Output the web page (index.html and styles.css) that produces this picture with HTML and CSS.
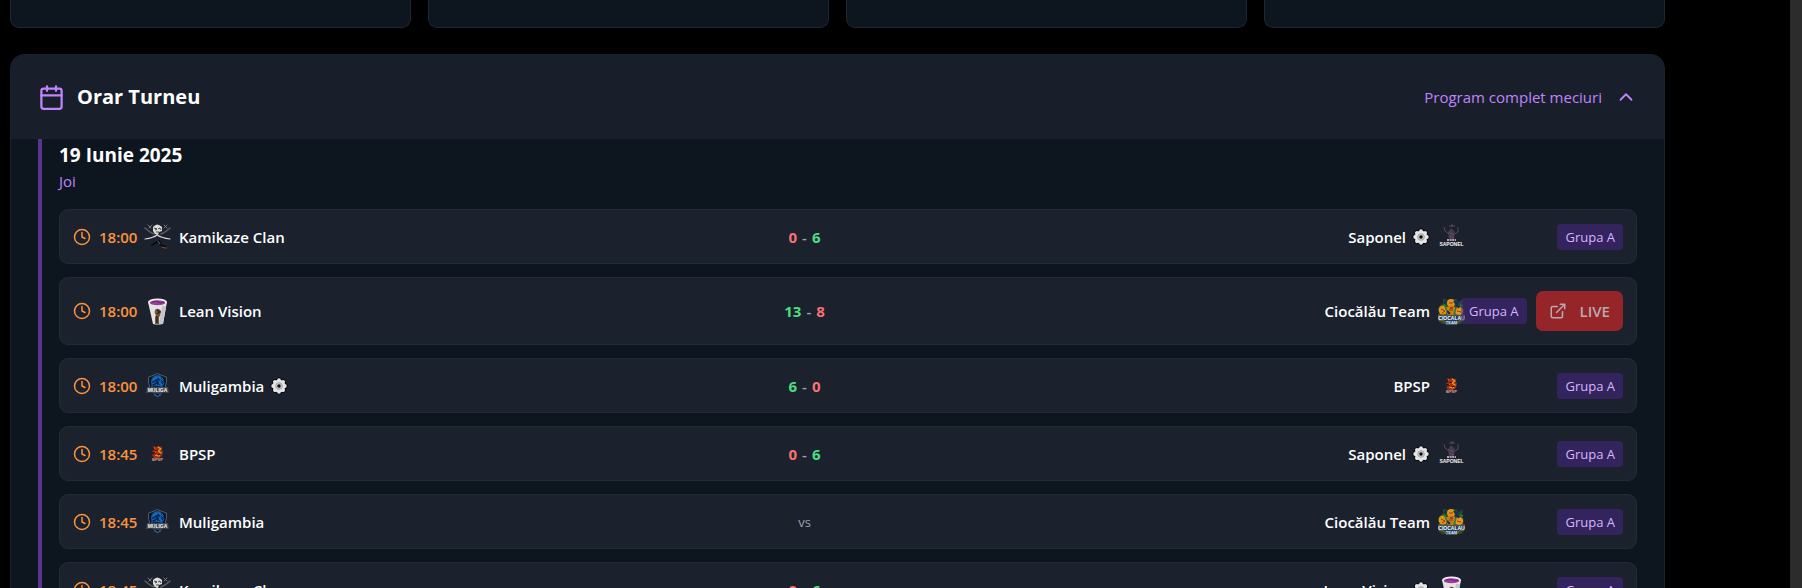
FILE: index.html
```html
<!DOCTYPE html>
<html lang="ro">
<head>
<meta charset="utf-8">
<title>Orar Turneu</title>
<link rel="stylesheet" href="styles.css">
</head>
<body>
<svg class="sprite" aria-hidden="true">
  <symbol id="clock" viewBox="0 0 24 24"><circle cx="12" cy="12" r="10"/><path d="M12 6v6l4 2"/></symbol>
  <symbol id="gear" viewBox="0 0 18 18">
    <g stroke="#0b0d10" stroke-width="5.400" stroke-linecap="round"><path d="M9 3v12M3 9h12M4.800 4.800l8.400 8.400M13.200 4.800l-8.400 8.400"/></g>
    <circle cx="9" cy="9" r="7" fill="#0b0d10"/>
    <g stroke="#e6e6e6" stroke-width="3.800" stroke-linecap="round"><path d="M9 3.200v11.600M3.200 9h11.600M4.900 4.900l8.200 8.200M13.100 4.900l-8.200 8.200"/></g>
    <circle cx="9" cy="9" r="6.300" fill="#e6e6e6"/>
    <circle cx="9" cy="9" r="3.400" fill="#c4c4c4" stroke="#a2a2a2" stroke-width=".8"/>
    <circle cx="9" cy="9" r="1.700" fill="#0b0d10"/>
  </symbol>
  <symbol id="kamikaze" viewBox="0 0 27 27">
    <g fill="none" stroke-linecap="round">
      <path d="M1 5q4 4 9 6M26 5q-4 4-9 6" stroke="#5e5c5b" stroke-width="1.500"/>
      <path d="M4 2l3 3M5 5l3-3M20 5l3-3M20 2l3 3" stroke="#85817d" stroke-width=".9"/>
      <path d="M1 16q8-1 12-4q5 3 13 4" stroke="#d9d9d6" stroke-width="1.200"/>
      <path d="M8 22l7-4 2 4 4 2" stroke="#080a0d" stroke-width="2"/>
      <path d="M14 18l2 3M18 24l3 1" stroke="#776560" stroke-width=".9"/>
    </g>
    <path d="M9 4q4-5 9 0l0 4-3 1-1 3-3-1-2-3z" fill="#dddcd8"/>
    <path d="M10 5l3 1-2 1M14 6l2-1 1 2M12 9l3 0" fill="none" stroke="#202229" stroke-width=".8"/>
    <path d="M21 25h2" stroke="#b32727" stroke-width="1"/>
  </symbol>
  <symbol id="lean" viewBox="0 0 27 27">
    <path d="M4 4l5 22q4 1 10 0l4-22z" fill="#e4e2e3"/>
    <path d="M18 8h4l-3 18h-4z" fill="#c6c4c7"/>
    <ellipse cx="13.500" cy="4" rx="9.500" ry="3.500" fill="#f4f1f3"/>
    <ellipse cx="13.500" cy="4.800" rx="7.800" ry="2.500" fill="#9b3d9e"/>
    <path d="M8 4q4-2 9 1l3-1" stroke="#6d246f" fill="none"/>
    <path d="M11 12q3-3 6 1l-1 5-1 1v7h-4v-7l1-2q-2-1-1-5z" fill="#70583a"/>
    <path d="M13 12l3 2-3 2M13 18v7" stroke="#292018" stroke-width="1.400" fill="none"/>
  </symbol>
  <symbol id="muli" viewBox="0 0 27 27">
    <path d="M4.500 5l4.500-1.500 4.500-2 4.500 2 4.500 1.500q1 13-9 19.500Q3.500 18 4.500 5z" fill="#0b1320" stroke="#53606e"/>
    <path d="M7 9q1-6 8-6l4 3 1.500 5-2 4-6-1-5 1z" fill="#0e5cab"/>
    <path d="M8 10l6-4 3 2-3 1 2 4-4-1-3 3zM17 5l3 5-2 3z" fill="#082752"/>
    <path d="M9 8l4-3M15 5l4 4M8 12l4-2M15 11l3 2" stroke="#2a7dcc" stroke-width=".8"/>
    <path d="M3 15h21l1 6-6-.500-5 1.500-6-1.500-6 .500z" fill="#454a50"/>
    <text x="13.500" y="20" text-anchor="middle" class="crest" fill="#f2f2f0" font-size="5">MULIGA</text>
    <path d="M10 23l3.500 1.500L17 23" stroke="#1665aa" fill="none"/>
  </symbol>
  <symbol id="bpsp" viewBox="0 0 27 27">
    <path d="M9 6l3 1 2-1 4 1-1 3 2 1-1 5-3 2h-5l-2-3 2-1-2-3 3-1z" fill="#a92c10"/>
    <path d="M14 7l3 2-3 2 3 2-2 3-4-1" fill="none" stroke="#dea01c" stroke-width="1.200"/>
    <path d="M10 7l2 4-1 3" fill="none" stroke="#f04b18"/>
    <path d="M14 15l3-1M11 10l3 1M9 12l3 2" stroke="#16120e"/>
    <text x="13.500" y="20.500" text-anchor="middle" class="crest" fill="#d6a49b" font-size="4">BPSP</text>
  </symbol>
  <symbol id="saponel" viewBox="0 0 27 27">
    <path d="M6 3q1 6 5 6l1-6h4l1 6q4-2 3-6l2 5-4 4 3 8H6l4-8-5-4z" fill="#211e2b"/>
    <path d="M10 9l3-4 4 4-1 8-5-1z" fill="#443b52"/>
    <path d="M11 3h6M14 1v3M6 4l1 4 4 3M20 4v5l-3 2M12 10l4 2M11 13l5 2" stroke="#696075" fill="none" stroke-width=".7"/>
    <path d="M9 17h9" stroke="#d7d2d8" fill="none" stroke-width="1.400" stroke-dasharray="2 .600"/>
    <text x="13.500" y="22.500" text-anchor="middle" class="crest" fill="#f4f2f3" font-size="5">SAPONEL</text>
  </symbol>
  <symbol id="cioc" viewBox="0 0 27 27">
    <path d="M1 9l4-4V1h3l4 3 1-3h5l3 3 4-3-1 7 2 4-1 8 2 2-4 4H4l-4-3 1-4z" fill="#29472c"/>
    <circle cx="13" cy="5" r="4" fill="#dc9516"/><circle cx="5" cy="12" r="4.500" fill="#e09217"/><circle cx="21" cy="13" r="4" fill="#e79719"/>
    <path d="M9 9l4-2 4 2 1 6-4 3-5-2z" fill="#c6800f"/>
    <path d="M16 3l5 7M8 2l-2 5M18 7l3-5M9 13l3 3" stroke="#172b5b" stroke-width="2"/>
    <path d="M6 6l3 7M18 10l-2 6M22 7l3 1" stroke="#27813d" stroke-width="1.600"/>
    <path d="M3 11l4 2-3 2M19 13l4 1M11 5h4M11 12h4" stroke="#8a3e13" fill="none"/>
    <path d="M12 9h3v2h-3z" fill="#aa315d"/>
    <path d="M0 17h27l-1 5-5 1-3 4H9l-3-4-5-1z" fill="#1d3e61" stroke="#ad7725" stroke-width=".7"/>
    <text x="13.500" y="21.500" text-anchor="middle" class="crest" fill="#fff" font-size="5">CIOCALAU</text>
    <text x="13.500" y="25.500" text-anchor="middle" class="crest" fill="#dfe9ee" font-size="4">TEAM</text>
  </symbol>
</svg>
<div class="page">
  <main class="content">
    <div class="cards"><div class="card"></div><div class="card"></div><div class="card"></div><div class="card"></div></div>
    <section class="panel">
      <header class="panel-head">
        <svg class="icon-lg line" viewBox="0 0 24 24" aria-hidden="true"><path d="M8 2v4M16 2v4M3 10h18"/><rect x="3" y="4" width="18" height="18" rx="2"/></svg>
        <h2>Orar Turneu</h2>
        <button class="toggle" type="button" aria-expanded="true">Program complet meciuri
          <svg class="icon-md line" viewBox="0 0 24 24" aria-hidden="true"><path d="m18 15-6-6-6 6"/></svg>
        </button>
      </header>
      <div class="panel-body">
        <div class="day">
          <h3>19 Iunie 2025</h3>
          <p class="weekday">Joi</p>
          <ul class="matches">
            <li class="match">
              <div class="time"><svg class="icon-sm line"><use href="#clock"/></svg><time>18:00</time></div>
              <div class="teams">
                <div class="team"><svg class="logo"><use href="#kamikaze"/></svg><span class="name">Kamikaze Clan</span></div>
                <div class="score"><b class="loss">0</b><span>-</span><b class="win">6</b></div>
                <div class="team away"><span class="name">Saponel<svg class="gear"><use href="#gear"/></svg></span><svg class="logo"><use href="#saponel"/></svg></div>
              </div>
              <div class="meta"><span class="badge">Grupa A</span></div>
            </li>
            <li class="match">
              <div class="time"><svg class="icon-sm line"><use href="#clock"/></svg><time>18:00</time></div>
              <div class="teams">
                <div class="team"><svg class="logo"><use href="#lean"/></svg><span class="name">Lean Vision</span></div>
                <div class="score"><b class="win">13</b><span>-</span><b class="loss">8</b></div>
                <div class="team away"><span class="name">Ciocălău Team</span><svg class="logo"><use href="#cioc"/></svg></div>
              </div>
              <div class="meta"><span class="badge">Grupa A</span>
                <button class="live" type="button" disabled><svg class="icon-sm line" viewBox="0 0 24 24" aria-hidden="true"><path d="M15 3h6v6M10 14 21 3M18 13v6a2 2 0 0 1-2 2H5a2 2 0 0 1-2-2V8a2 2 0 0 1 2-2h6"/></svg>LIVE</button>
              </div>
            </li>
            <li class="match">
              <div class="time"><svg class="icon-sm line"><use href="#clock"/></svg><time>18:00</time></div>
              <div class="teams">
                <div class="team"><svg class="logo"><use href="#muli"/></svg><span class="name">Muligambia<svg class="gear"><use href="#gear"/></svg></span></div>
                <div class="score"><b class="win">6</b><span>-</span><b class="loss">0</b></div>
                <div class="team away"><span class="name">BPSP</span><svg class="logo"><use href="#bpsp"/></svg></div>
              </div>
              <div class="meta"><span class="badge">Grupa A</span></div>
            </li>
            <li class="match">
              <div class="time"><svg class="icon-sm line"><use href="#clock"/></svg><time>18:45</time></div>
              <div class="teams">
                <div class="team"><svg class="logo"><use href="#bpsp"/></svg><span class="name">BPSP</span></div>
                <div class="score"><b class="loss">0</b><span>-</span><b class="win">6</b></div>
                <div class="team away"><span class="name">Saponel<svg class="gear"><use href="#gear"/></svg></span><svg class="logo"><use href="#saponel"/></svg></div>
              </div>
              <div class="meta"><span class="badge">Grupa A</span></div>
            </li>
            <li class="match">
              <div class="time"><svg class="icon-sm line"><use href="#clock"/></svg><time>18:45</time></div>
              <div class="teams">
                <div class="team"><svg class="logo"><use href="#muli"/></svg><span class="name">Muligambia</span></div>
                <div class="score versus">vs</div>
                <div class="team away"><span class="name">Ciocălău Team</span><svg class="logo"><use href="#cioc"/></svg></div>
              </div>
              <div class="meta"><span class="badge">Grupa A</span></div>
            </li>
            <li class="match">
              <div class="time"><svg class="icon-sm line"><use href="#clock"/></svg><time>18:45</time></div>
              <div class="teams">
                <div class="team"><svg class="logo"><use href="#kamikaze"/></svg><span class="name">Kamikaze Clan</span></div>
                <div class="score"><b class="loss">0</b><span>-</span><b class="win">6</b></div>
                <div class="team away"><span class="name">Lean Vision<svg class="gear"><use href="#gear"/></svg></span><svg class="logo"><use href="#lean"/></svg></div>
              </div>
              <div class="meta"><span class="badge">Grupa A</span></div>
            </li>
          </ul>
        </div>
      </div>
    </section>
  </main>
  <div class="scroll-track"></div>
</div>
</body>
</html>
```
FILE: styles.css
```css
* { box-sizing: border-box; }
body {
  margin: 0;
  background: #000;
  color: #fff;
  font: 15px/24px "Open Sans", "Noto Sans", sans-serif;
}
h2, h3, p, ul { margin: 0; padding: 0; }
svg { display: block; flex: none; }
button { font: inherit; border: 0; }
.sprite { display: none; }
.crest { font-family: "Liberation Sans", sans-serif; font-weight: 700; }
.line { fill: none; stroke: currentColor; stroke-width: 2; stroke-linecap: round; stroke-linejoin: round; }
.icon-sm { width: 18px; height: 18px; }
.icon-md { width: 22px; height: 22px; }
.icon-lg { width: 27px; height: 27px; color: #c084fc; }

.page { display: flex; height: 100vh; overflow: hidden; }
.content { flex: 1; min-width: 0; padding: 0 125px 0 10px; }
.scroll-track { width: 12px; background: #2c2c2c; }

.cards { display: grid; grid-template-columns: repeat(4, 1fr); gap: 17px; margin-bottom: 26px; }
.card { height: 28px; background: #0d151e; border: 1px solid #1f2733; border-top: 0; border-radius: 0 0 9px 9px; }

.panel { background: #0d151e; border: 1px solid #1a222d; border-radius: 14px; overflow: hidden; }
.panel-head { display: flex; align-items: center; gap: 12px; height: 84px; padding: 0 27px; background: #191f2a; }
h2 { font-size: 20px; line-height: 28px; font-weight: 700; }
.toggle { display: flex; align-items: center; gap: 13px; margin-left: auto; padding: 0; background: none; color: #c084fc; }

.panel-body { padding: 0 27px; }
.day { border-left: 4px solid #5b3490; padding: 2px 0 13px 17px; }
h3 { font-size: 19px; line-height: 28px; font-weight: 700; }
.weekday { margin-bottom: 16px; color: #c084fc; }

.matches { display: grid; gap: 13px; list-style: none; }
.match { display: flex; align-items: center; padding: 13px; background: #1b222e; border: 1px solid #212b37; border-radius: 9px; font-weight: 600; }
.time { display: flex; align-items: center; gap: 8px; width: 71px; color: #fb923c; }
.teams { flex: 1; min-width: 0; display: grid; grid-template-columns: 1fr auto 1fr; align-items: center; }
.team { display: flex; align-items: center; gap: 8px; }
.name { display: flex; align-items: center; gap: 6px; }
.away { justify-content: flex-end; }
.logo { width: 27px; height: 27px; }
.gear { width: 18px; height: 18px; }
.score { display: flex; gap: 5px; color: #9ca3af; }
.score b { font-weight: 700; }
.win { color: #4ade80; }
.loss { color: #f87171; }
.versus { font-size: 13px; font-weight: 400; }

.meta { display: flex; align-items: center; justify-content: flex-end; gap: 9px; width: 158px; }
.badge { flex: none; padding: 1px 8px; border-radius: 4px; background: rgba(76, 38, 140, .5); color: #d8b4fe; font-size: 13px; font-weight: 400; white-space: nowrap; }
.live { display: flex; flex: none; align-items: center; gap: 13px; height: 40px; padding: 0 13px; border-radius: 7px; background: #952529; color: #b8abae; font-size: 15px; font-weight: 600; }
```
